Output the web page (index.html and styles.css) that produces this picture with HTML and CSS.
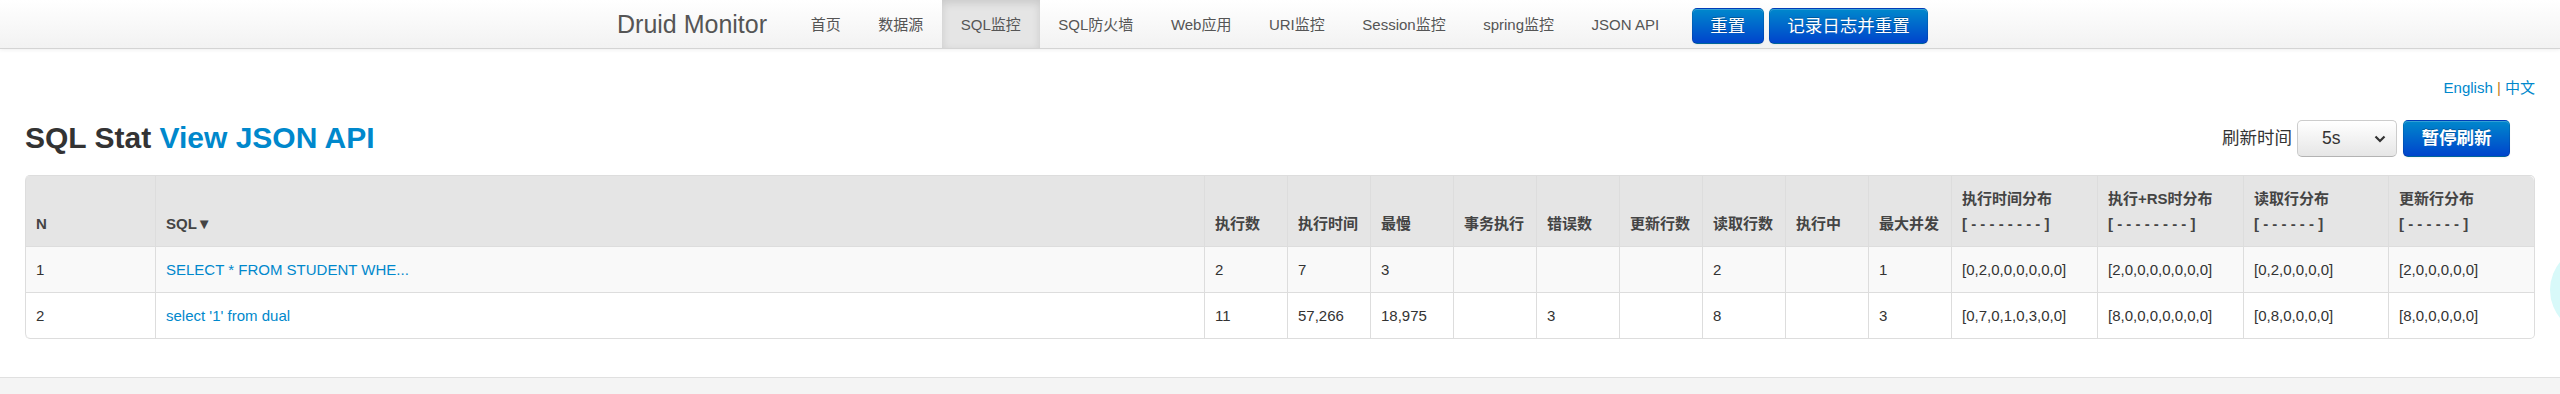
FILE: index.html
```html
<!DOCTYPE html>
<html lang="zh-CN">
<head>
<meta charset="utf-8">
<title>Druid Stat Index</title>
<link rel="stylesheet" href="styles.css">
</head>
<body>
<div class="navbar">
  <div class="navbar-container">
    <a class="brand">Druid Monitor</a>
    <ul class="nav">
      <li><a>首页</a></li>
      <li><a>数据源</a></li>
      <li class="active"><a>SQL监控</a></li>
      <li><a>SQL防火墙</a></li>
      <li><a>Web应用</a></li>
      <li><a>URI监控</a></li>
      <li><a>Session监控</a></li>
      <li><a>spring监控</a></li>
      <li><a>JSON API</a></li>
    </ul>
    <div class="nav-btns">
      <a class="btn btn-primary">重置</a>
      <a class="btn btn-primary">记录日志并重置</a>
    </div>
  </div>
</div>

<div class="main">
  <div class="lang"><a>English</a> <span class="sep">|</span> <a>中文</a></div>
  <div class="heading">
    <h3>SQL Stat <a>View JSON API</a></h3>
    <div class="refresh">
      <label class="refresh-label">刷新时间</label>
      <div class="select">
        <span>5s</span>
        <svg class="chev" width="12" height="8" viewBox="0 0 12 8"><path d="M1.5 1.5 L6 6 L10.5 1.5" fill="none" stroke="#333" stroke-width="2.2"/></svg>
      </div>
      <a class="btn btn-primary btn-bold">暂停刷新</a>
    </div>
  </div>

  <table class="stat">
    <thead>
      <tr>
        <th class="c-n">N</th>
        <th class="c-sql">SQL▼</th>
        <th class="c-num">执行数</th>
        <th class="c-num">执行时间</th>
        <th class="c-num">最慢</th>
        <th class="c-num">事务执行</th>
        <th class="c-num">错误数</th>
        <th class="c-num">更新行数</th>
        <th class="c-num">读取行数</th>
        <th class="c-num">执行中</th>
        <th class="c-num">最大并发</th>
        <th class="c-dist">执行时间分布<br>[ - - - - - - - - ]</th>
        <th class="c-dist">执行+RS时分布<br>[ - - - - - - - - ]</th>
        <th class="c-dist2">读取行分布<br>[ - - - - - - ]</th>
        <th class="c-dist">更新行分布<br>[ - - - - - - ]</th>
      </tr>
    </thead>
    <tbody>
      <tr>
        <td>1</td>
        <td><a>SELECT * FROM STUDENT WHE...</a></td>
        <td>2</td>
        <td>7</td>
        <td>3</td>
        <td></td>
        <td></td>
        <td></td>
        <td>2</td>
        <td></td>
        <td>1</td>
        <td>[0,2,0,0,0,0,0,0]</td>
        <td>[2,0,0,0,0,0,0,0]</td>
        <td>[0,2,0,0,0,0]</td>
        <td>[2,0,0,0,0,0]</td>
      </tr>
      <tr>
        <td>2</td>
        <td><a>select '1' from dual</a></td>
        <td>11</td>
        <td>57,266</td>
        <td>18,975</td>
        <td></td>
        <td>3</td>
        <td></td>
        <td>8</td>
        <td></td>
        <td>3</td>
        <td>[0,7,0,1,0,3,0,0]</td>
        <td>[8,0,0,0,0,0,0,0]</td>
        <td>[0,8,0,0,0,0]</td>
        <td>[8,0,0,0,0,0]</td>
      </tr>
    </tbody>
  </table>
</div>

<div class="footer"></div>
<div class="bubble"></div>
</body>
</html>
```

FILE: styles.css
```css
* { box-sizing: border-box; }

html, body {
  margin: 0;
  padding: 0;
}

body {
  position: relative;
  width: 2560px;
  height: 394px;
  overflow: hidden;
  background: #ffffff;
  color: #333333;
  font-family: "Liberation Sans", Arial, "Noto Sans CJK SC", sans-serif;
  font-size: 17.5px;
  line-height: 25px;
}

a {
  color: #0088cc;
  text-decoration: none;
}

/* ---------- navbar ---------- */
.navbar {
  height: 49px;
  background: linear-gradient(#ffffff, #f2f2f2);
  border-bottom: 1px solid #d4d4d4;
  box-shadow: 0 1px 4px rgba(0, 0, 0, 0.065);
}

.navbar-container {
  width: 1376px;
  height: 48px;
  margin: 0 auto;
  display: flex;
  align-items: stretch;
}

.brand {
  padding: 1px 25px 0 25px;
  font-size: 25px;
  line-height: 47px;
  color: #555555;
}

.nav {
  display: flex;
  margin: 0;
  padding: 0;
  list-style: none;
}

.nav li a {
  display: block;
  height: 48px;
  padding: 1px 18.75px 0;
  font-size: 15px;
  line-height: 47px;
  color: #555555;
}

.nav li.active a {
  background: #e5e5e5;
  box-shadow: inset 0 3px 8px rgba(0, 0, 0, 0.125);
  color: #555555;
}

.nav-btns {
  display: flex;
  align-items: flex-start;
  gap: 5px;
  margin-left: 14px;
  padding-top: 8px;
}

/* ---------- buttons ---------- */
.btn {
  display: inline-block;
  padding: 5px 17.5px;
  font-size: 17.5px;
  line-height: 24px;
  border: 1px solid;
  border-radius: 5px;
  white-space: nowrap;
}

.btn-primary {
  color: #ffffff;
  background: linear-gradient(#0088cc, #0044cc);
  border-color: rgba(0, 0, 0, 0.1) rgba(0, 0, 0, 0.1) rgba(0, 0, 0, 0.25);
  text-shadow: 0 -1px 0 rgba(0, 0, 0, 0.25);
  box-shadow: inset 0 1px 0 rgba(255, 255, 255, 0.2), 0 1px 2px rgba(0, 0, 0, 0.05);
}

.btn-bold {
  font-weight: bold;
  line-height: 25px;
  margin-left: 6px;
}

/* ---------- main ---------- */
.main {
  padding: 26px 25px 0;
}

.lang {
  text-align: right;
  font-size: 15px;
  line-height: 25px;
}

.lang .sep {
  color: #c47a22;
}

.heading {
  display: flex;
  justify-content: space-between;
  align-items: center;
  height: 50px;
  margin: 12.5px 0;
}

.heading h3 {
  margin: 0;
  font-size: 30px;
  line-height: 50px;
  font-weight: bold;
  color: #333333;
}

.refresh {
  display: flex;
  align-items: center;
  margin-right: 25px;
  padding-top: 2px;
}

.refresh-label {
  margin-right: 5px;
  font-size: 17.5px;
  color: #333333;
}

.select {
  display: flex;
  align-items: center;
  justify-content: space-between;
  width: 100px;
  height: 37px;
  padding: 0 10px 0 24px;
  border: 1px solid #cccccc;
  border-bottom-color: #b3b3b3;
  border-radius: 5px;
  background: linear-gradient(#ffffff, #e6e6e6);
  font-size: 17.5px;
  color: #333333;
}

/* ---------- table ---------- */
.stat {
  width: 100%;
  table-layout: fixed;
  border-collapse: separate;
  border-spacing: 0;
  border: 1px solid #dddddd;
  border-left: 0;
  border-radius: 5px;
  font-size: 15px;
  line-height: 25px;
}

.stat th,
.stat td {
  padding: 10px;
  border-left: 1px solid #dddddd;
  border-top: 1px solid #dddddd;
  text-align: left;
  vertical-align: top;
  white-space: nowrap;
}

.stat thead th {
  border-top: 0;
  vertical-align: bottom;
  background: #e5e5e5;
  font-weight: bold;
  color: #444444;
}

.stat thead th:first-child { border-top-left-radius: 5px; }
.stat thead th:last-child { border-top-right-radius: 5px; }
.stat tbody tr:last-child td:first-child { border-bottom-left-radius: 5px; }
.stat tbody tr:last-child td:last-child { border-bottom-right-radius: 5px; }

.stat tbody tr:nth-child(odd) td {
  background: #f9f9f9;
}

.stat td {
  color: #333333;
}

.c-n { width: 130px; }
.c-sql { width: 1049px; }
.c-num { width: 83px; }
.c-dist { width: 146px; }
.c-dist2 { width: 145px; }

/* ---------- footer ---------- */
.footer {
  height: 17px;
  margin-top: 38px;
  border-top: 1px solid #e0e0e0;
  background: #f4f4f4;
}

.bubble {
  position: absolute;
  left: 2550px;
  top: 246px;
  width: 88px;
  height: 88px;
  border-radius: 50%;
  background: #d8f9f9;
}
```
